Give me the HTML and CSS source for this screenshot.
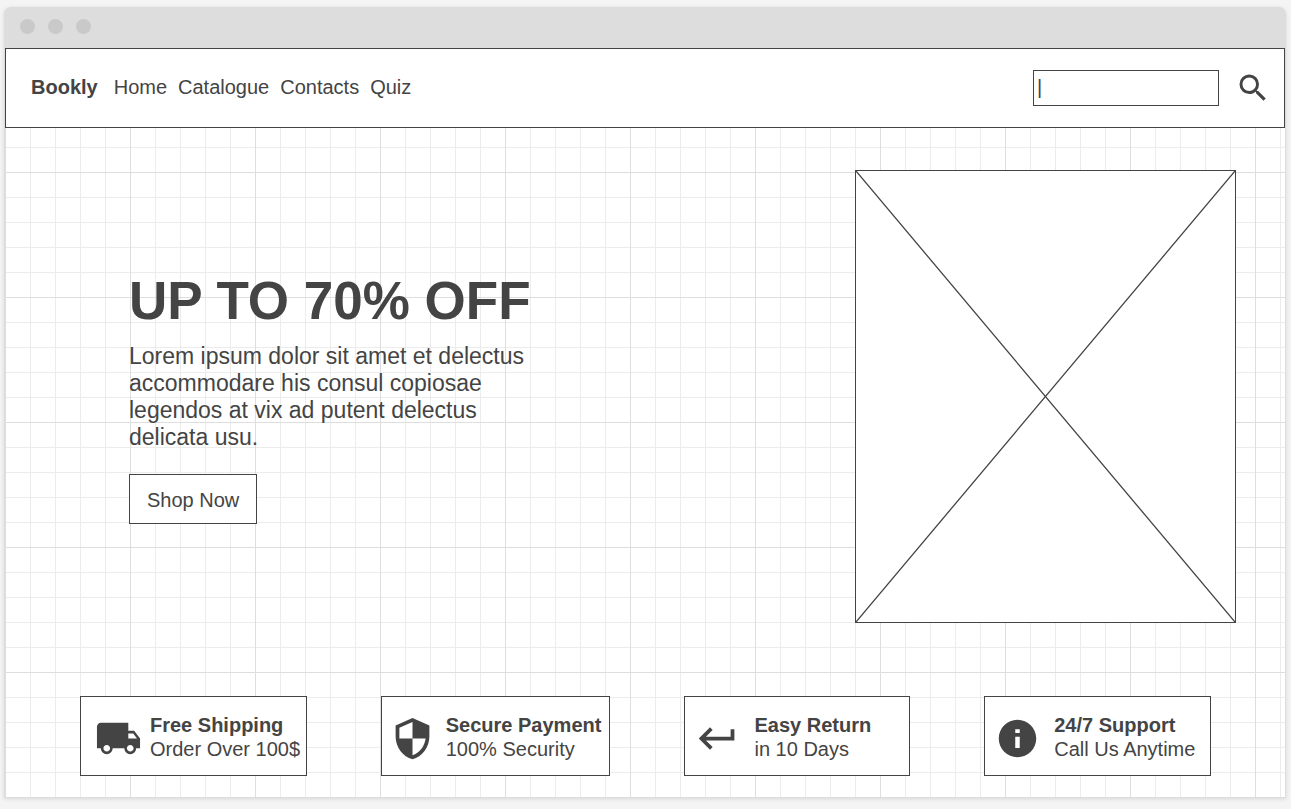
FILE: index.html
```html
<!DOCTYPE html>
<html lang="en">
<head>
<meta charset="utf-8">
<meta name="viewport" content="width=device-width, initial-scale=1">
<title>Bookly</title>
<link rel="stylesheet" href="styles.css">
</head>
<body>
<div class="window">
  <div class="titlebar"><span class="dot"></span><span class="dot"></span><span class="dot"></span></div>
  <div class="page">
    <header class="header">
      <nav class="nav">
        <a class="brand" href="#">Bookly</a>
        <a href="#">Home</a>
        <a href="#">Catalogue</a>
        <a href="#">Contacts</a>
        <a href="#">Quiz</a>
      </nav>
      <form class="search">
        <input class="search-input" type="text" aria-label="Search" value="|">
        <button class="search-button" type="button" aria-label="Search">
          <svg class="icon-search" viewBox="0 0 24 24"><path d="M15.5 14h-.79l-.28-.27A6.47 6.47 0 0 0 16 9.500 6.500 6.500 0 1 0 9.500 16c1.610 0 3.090-.59 4.230-1.570l.27.28v.79l5 4.990L20.490 19l-4.990-5zm-6 0C7.010 14 5 11.990 5 9.500S7.010 5 9.500 5 14 7.010 14 9.500 11.990 14 9.500 14z"/></svg>
        </button>
      </form>
    </header>
    <main>
      <section class="hero">
        <div class="hero-copy">
          <h1>UP TO 70% OFF</h1>
          <p>Lorem ipsum dolor sit amet et delectus accommodare his consul copiosae legendos at vix ad putent delectus delicata usu.</p>
          <button class="shop" type="button">Shop Now</button>
        </div>
        <svg class="placeholder" viewBox="0 0 379 451" preserveAspectRatio="none" role="img" aria-label="Image placeholder"><path d="M0 0L379 451M379 0L0 451"/></svg>
      </section>
      <section class="features">
        <article class="card card-shipping">
          <svg class="icon icon-large" viewBox="0 0 24 24"><path d="M20 8h-3V4H3c-1.100 0-2 .9-2 2v11h2c0 1.660 1.340 3 3 3s3-1.340 3-3h6c0 1.660 1.340 3 3 3s3-1.340 3-3h2v-5l-3-4zM6 18.700c-.94 0-1.700-.76-1.700-1.700s.76-1.700 1.700-1.700 1.700.76 1.700 1.700-.76 1.700-1.700 1.700zm13.500-9.200l1.960 2.500H17V9.500h2.500zm-1.500 9.200c-.94 0-1.700-.76-1.700-1.700s.76-1.700 1.700-1.700 1.700.76 1.700 1.700-.76 1.700-1.700 1.700z"/></svg>
          <div><h2>Free Shipping</h2><p>Order Over 100$</p></div>
        </article>
        <article class="card card-payment">
          <svg class="icon" viewBox="0 0 24 24"><path d="M12 1L3 5v6c0 5.550 3.840 10.740 9 12 5.160-1.260 9-6.450 9-12V5l-9-4zm0 10.990h7c-.53 4.120-3.280 7.790-7 8.940V12H5V6.300l7-3.110v8.800z"/></svg>
          <div><h2>Secure Payment</h2><p>100% Security</p></div>
        </article>
        <article class="card">
          <svg class="icon" viewBox="0 0 24 24"><path d="M19 7v4H5.830l3.580-3.590L8 6l-6 6 6 6 1.410-1.410L5.830 13H21V7z"/></svg>
          <div><h2>Easy Return</h2><p>in 10 Days</p></div>
        </article>
        <article class="card">
          <svg class="icon" viewBox="0 0 24 24"><path d="M12 2C6.480 2 2 6.480 2 12s4.480 10 10 10 10-4.480 10-10S17.520 2 12 2zm1.200 15h-2.400v-6h2.400v6zm0-8h-2.400V7h2.400v2z"/></svg>
          <div><h2>24/7 Support</h2><p>Call Us Anytime</p></div>
        </article>
      </section>
    </main>
  </div>
</div>
</body>
</html>
```

FILE: styles.css
```css
* { box-sizing: border-box; }

body {
  display: flex;
  min-height: 100vh;
  margin: 0;
  padding: 7px 5px 11px 4px;
  background: #f4f4f4;
  color: #444;
  font: 20px/24px "Liberation Sans", Arial, sans-serif;
}

h1, h2, p { margin: 0; }
a { color: inherit; text-decoration: none; }
button, input { color: inherit; font: inherit; border-radius: 0; }
svg { display: block; fill: #444; flex: none; }

.window {
  display: flex;
  flex-direction: column;
  flex: 1;
  min-width: 0;
  border-radius: 7px 7px 0 0;
  background: #ddd;
  box-shadow: 0 1px 4px rgba(0, 0, 0, 0.12);
}

.titlebar {
  display: flex;
  gap: 13px;
  padding: 12px 16px 14px;
}

.dot {
  width: 15px;
  height: 15px;
  border-radius: 50%;
  background: #c9c9c9;
}

.page {
  flex: 1;
  margin: 0 1px 1px;
  background-color: #fff;
  background-image:
    linear-gradient(to right, #dedede 1px, transparent 1px),
    linear-gradient(to bottom, #dedede 1px, transparent 1px),
    linear-gradient(to right, #ececec 1px, transparent 1px),
    linear-gradient(to bottom, #ececec 1px, transparent 1px);
  background-size: 125px 125px, 125px 125px, 25px 25px, 25px 25px;
  background-position: 0 -1px;
}

.header {
  display: flex;
  align-items: center;
  justify-content: space-between;
  height: 80px;
  padding: 0 13px 0 25px;
  border: 1px solid #444;
  background: #fff;
}

.nav { display: flex; gap: 11px; padding-bottom: 2px; }
.brand { margin-right: 5px; font-weight: bold; }

.search { display: flex; align-items: center; gap: 16px; }

.search-input {
  width: 186px;
  height: 36px;
  padding: 0 3px 2px;
  border: 1px solid #444;
  background: #fff;
}

.search-button { padding: 0; border: 0; background: none; }
.icon-search { width: 36px; height: 36px; }

.hero {
  display: flex;
  align-items: center;
  justify-content: space-between;
  padding: 42px 49px 0 124px;
}

.hero-copy { width: 420px; padding-top: 2px; }

h1 {
  margin-bottom: 12px;
  font-size: 53px;
  line-height: 60px;
  white-space: nowrap;
}

.hero-copy p {
  margin-bottom: 23px;
  font-size: 23px;
  line-height: 27px;
}

.shop {
  display: block;
  height: 50px;
  padding: 2px 17px 0;
  border: 1px solid #444;
  background: #fff;
}

.placeholder {
  width: 381px;
  height: 453px;
  border: 1px solid #444;
  background: #fff;
  fill: none;
  stroke: #444;
  stroke-width: 1.3;
}

.features {
  display: grid;
  grid-template-columns: 227fr 230fr 226fr 227fr;
  gap: 74px;
  padding: 73px 74px 21px 75px;
}

.card {
  display: flex;
  align-items: center;
  gap: 14px;
  height: 80px;
  padding: 4px 0 0 10px;
  border: 1px solid #444;
  background: #fff;
  white-space: nowrap;
}

.card > div { padding-bottom: 2px; }

.card-shipping { gap: 8px; padding-left: 14px; }
.card-payment { gap: 11px; padding-left: 8px; }

.icon { width: 45px; height: 45px; }
.icon-large { width: 47px; height: 47px; }

h2 { font-size: 20px; line-height: 24px; }
```
